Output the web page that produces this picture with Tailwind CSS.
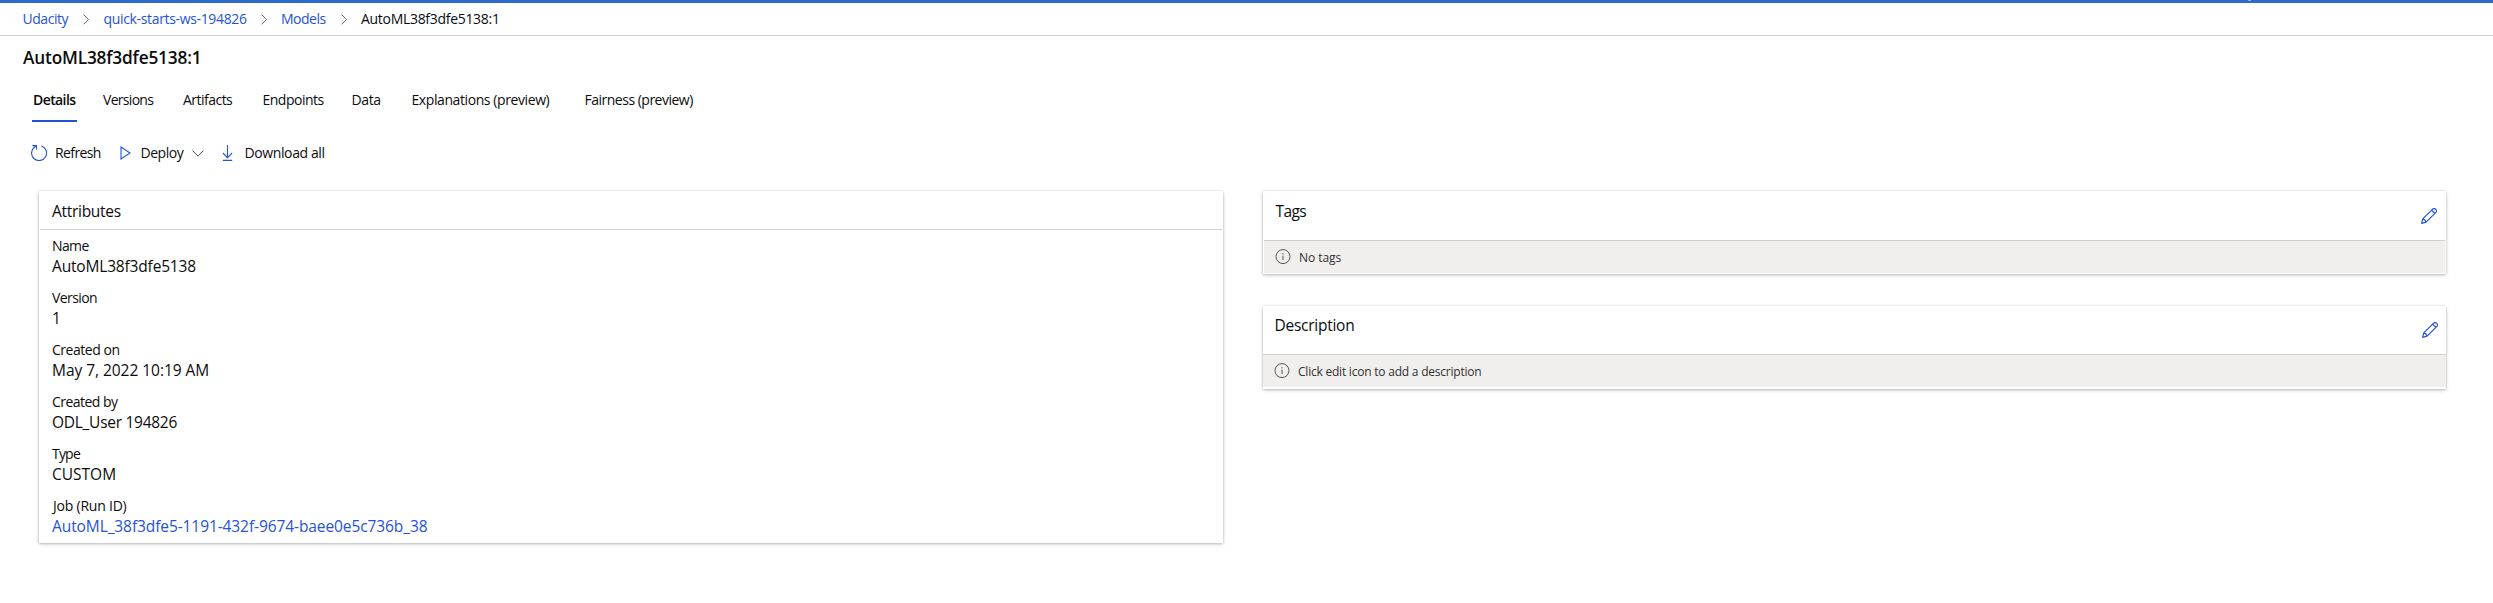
<!DOCTYPE html>
<html lang="en">
<head>
<meta charset="utf-8">
<title>AutoML38f3dfe5138:1</title>
<script src="https://cdn.jsdelivr.net/npm/@tailwindcss/browser@4"></script>
</head>
<body class="min-h-screen overflow-hidden bg-white font-['Open_Sans','Noto_Sans',sans-serif] text-sm leading-5 text-[#0c0c0c] whitespace-nowrap">
<div class="flex h-[3px] bg-[#2c6acb]"><div class="ml-[2248px] h-px w-[3px] bg-[#8fb4e8]"></div></div>
<nav class="flex h-[33px] border-b border-[#d0d0d0] pt-1.5 pl-[22.5px]">
  <a class="w-[60.5px] tracking-[-0.47px] text-[#2453d6]">Udacity</a>
  <svg class="mt-[5px] h-[11px] w-[7px]" viewBox="0 0 7 11" fill="none" stroke="#666" stroke-width="1"><path d="M.7.7 5.5 5.5.7 10.3"/></svg>
  <a class="ml-[13.5px] w-[157.5px] tracking-[-0.34px] text-[#2453d6]">quick-starts-ws-194826</a>
  <svg class="mt-[5px] h-[11px] w-[7px]" viewBox="0 0 7 11" fill="none" stroke="#666" stroke-width="1"><path d="M.7.7 5.5 5.5.7 10.3"/></svg>
  <a class="ml-[13px] w-[60px] tracking-[-0.5px] text-[#2453d6]">Models</a>
  <svg class="mt-[5px] h-[11px] w-[7px]" viewBox="0 0 7 11" fill="none" stroke="#666" stroke-width="1"><path d="M.7.7 5.5 5.5.7 10.3"/></svg>
  <span class="ml-[13px] tracking-[-0.3px]">AutoML38f3dfe5138:1</span>
</nav>
<h1 class="mt-2.5 ml-[23px] h-6 text-[17.25px] leading-6 font-semibold tracking-[-0.18px]">AutoML38f3dfe5138:1</h1>
<div class="mt-5 flex h-8 pl-8">
  <div class="mr-[26px] w-[45px] border-b-2 border-[#2453d6] pl-px font-semibold tracking-[-0.6px]">Details</div>
  <div class="w-[80px] tracking-[-0.7px]">Versions</div>
  <div class="w-[79.5px] tracking-[-0.52px]">Artifacts</div>
  <div class="w-[89px] tracking-[-0.5px]">Endpoints</div>
  <div class="w-[60px] tracking-[-0.4px]">Data</div>
  <div class="w-[173px] tracking-[-0.41px]">Explanations (preview)</div>
  <div class="tracking-[-0.5px]">Fairness (preview)</div>
</div>
<div class="mt-[21px] flex h-5 pl-[31px]">
  <svg class="mt-0.5 h-4 w-4" viewBox="0 0 16 16" fill="none" stroke="#2453d6" stroke-width="1.1"><path d="M10.4.9A7.5 7.5 0 1 1 3.3 2.2L5.2.9M1.4.6H5.5V4.6"/></svg>
  <span class="ml-2 w-[64.5px] tracking-[-0.6px]">Refresh</span>
  <svg class="mt-[3px] h-[14px] w-[11px]" viewBox="0 0 11 14" fill="none" stroke="#2453d6" stroke-width="1.1"><path d="M1 1 10 7 1 13Z"/></svg>
  <span class="ml-2.5 w-[51.5px] tracking-[-0.48px]">Deploy</span>
  <svg class="mt-[7px] h-[7px] w-3" viewBox="0 0 12 7" fill="none" stroke="#555" stroke-width="1"><path d="M.5.6 6 6.1 11.5.6"/></svg>
  <svg class="mt-0.5 ml-[18px] h-4 w-[11px]" viewBox="0 0 11 16" fill="none" stroke="#2453d6" stroke-width="1.1"><path d="M5.5 0V12.5M.9 8 5.5 12.6 10.1 8M.8 15.4H10.2"/></svg>
  <span class="ml-[11.5px] tracking-[-0.39px]">Download all</span>
</div>
<main class="mt-7 flex items-start gap-10 pl-[39px]">
  <section class="h-[352px] w-[1184px] px-px shadow-[0_1.6px_3.6px_rgba(0,0,0,0.2),0_0_2px_rgba(0,0,0,0.22)]">
    <h2 class="h-[39px] border-b border-[#d0d0d0] pt-2.5 pl-3 text-[15.5px] tracking-[-0.29px]">Attributes</h2>
    <dl class="flex flex-col gap-3 pt-1.5 pl-3">
      <div class="h-10"><dt class="tracking-[-0.6px]">Name</dt><dd class="text-[15.5px] tracking-[-0.17px]">AutoML38f3dfe5138</dd></div>
      <div class="h-10"><dt class="tracking-[-0.58px]">Version</dt><dd class="text-[15.5px]">1</dd></div>
      <div class="h-10"><dt class="tracking-[-0.47px]">Created on</dt><dd class="text-[15.5px] tracking-[-0.04px]">May 7, 2022 10:19 AM</dd></div>
      <div class="h-10"><dt class="tracking-[-0.53px]">Created by</dt><dd class="text-[15.5px] tracking-[-0.27px]">ODL_User 194826</dd></div>
      <div class="h-10"><dt class="tracking-[-0.8px]">Type</dt><dd class="text-[15.5px]">CUSTOM</dd></div>
      <div class="h-10"><dt class="pl-px tracking-[-0.22px]">Job (Run ID)</dt><dd class="text-[15.5px] tracking-[-0.09px] text-[#2453d6]">AutoML_38f3dfe5-1191-432f-9674-baee0e5c736b_38</dd></div>
    </dl>
  </section>
  <div class="flex w-[1183px] flex-col gap-8">
    <section class="h-[83px] px-px shadow-[0_1.6px_3.6px_rgba(0,0,0,0.2),0_0_2px_rgba(0,0,0,0.22)]">
      <div class="flex h-[50px] justify-between border-b border-[#d0d0d0] pt-2.5 pr-2 pl-[11.5px]">
        <h2 class="text-[15.5px] tracking-[-0.6px]">Tags</h2>
        <svg class="mt-[7px] h-4 w-4" viewBox="0 0 16 16" fill="none" stroke="#2453d6" stroke-width="1.2" stroke-linejoin="round"><path d="M.7 15.3 1.8 10.9 11.9.9Q13.4.1 14.7 1.3 15.9 2.6 15.1 4.1L5.1 14.2ZM1.8 10.9Q4.4 11.5 5.1 14.2M10.6 2.2 13.8 5.4"/></svg>
      </div>
      <div class="flex h-8 bg-[#f0efee] pt-2 pl-[11px] text-xs leading-4 text-[#323130]">
        <svg class="h-[16px] w-4" viewBox="0 0 16 16" fill="none" stroke="#555" stroke-width="1"><circle cx="8" cy="7.6" r="7"/><path d="M8 6.6V11M8 4.2V5.4"/></svg>
        <span class="mt-px ml-2 tracking-[-0.05px]">No tags</span>
      </div>
    </section>
    <section class="h-[83px] shadow-[0_1.6px_3.6px_rgba(0,0,0,0.2),0_0_2px_rgba(0,0,0,0.22)]">
      <div class="flex h-[49px] justify-between border-b border-[#d0d0d0] pt-[9px] pr-2 pl-[11.5px]">
        <h2 class="text-[15.5px] tracking-[-0.26px]">Description</h2>
        <svg class="mt-[7px] h-4 w-4" viewBox="0 0 16 16" fill="none" stroke="#2453d6" stroke-width="1.2" stroke-linejoin="round"><path d="M.7 15.3 1.8 10.9 11.9.9Q13.4.1 14.7 1.3 15.9 2.6 15.1 4.1L5.1 14.2ZM1.8 10.9Q4.4 11.5 5.1 14.2M10.6 2.2 13.8 5.4"/></svg>
      </div>
      <div class="flex h-8 bg-[#f0efee] pt-2 pl-[11px] text-xs leading-4 text-[#323130]">
        <svg class="h-[16px] w-4" viewBox="0 0 16 16" fill="none" stroke="#555" stroke-width="1"><circle cx="8" cy="7.6" r="7"/><path d="M8 6.6V11M8 4.2V5.4"/></svg>
        <span class="mt-px ml-2 tracking-[-0.22px]">Click edit icon to add a description</span>
      </div>
    </section>
  </div>
</main>
</body>
</html>
